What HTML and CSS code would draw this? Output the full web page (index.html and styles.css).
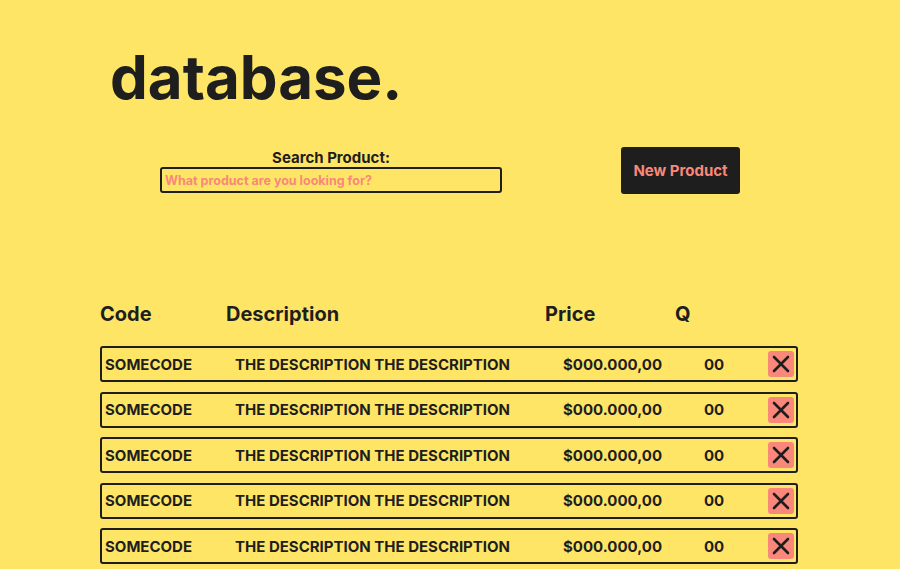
FILE: index.html
```html
<!DOCTYPE html>
<html>
<head>
<meta charset="utf-8">
<link rel="stylesheet" href="styles.css">
</head>
<body>
<main class="page">
  <h1 class="title">database.</h1>
  <section class="toolbar">
    <div class="search">
      <label class="search-label" for="q">Search Product:</label>
      <input id="q" class="search-input" type="text" placeholder="What product are you looking for?">
    </div>
    <button class="new-btn">New Product</button>
  </section>
  <section class="table">
    <div class="thead">
      <span>Code</span><span>Description</span><span>Price</span><span>Q</span>
    </div>
    <div class="rows">
      <div class="row"><span>SOMECODE</span><span>THE DESCRIPTION THE DESCRIPTION</span><span>$000.000,00</span><span>00</span><button class="del"><svg viewBox="0 0 26 26" width="26" height="26"><path d="M6 6 L20 20 M20 6 L6 20" stroke="#1e1e1e" stroke-width="2.6" stroke-linecap="round"/></svg></button></div>
      <div class="row"><span>SOMECODE</span><span>THE DESCRIPTION THE DESCRIPTION</span><span>$000.000,00</span><span>00</span><button class="del"><svg viewBox="0 0 26 26" width="26" height="26"><path d="M6 6 L20 20 M20 6 L6 20" stroke="#1e1e1e" stroke-width="2.6" stroke-linecap="round"/></svg></button></div>
      <div class="row"><span>SOMECODE</span><span>THE DESCRIPTION THE DESCRIPTION</span><span>$000.000,00</span><span>00</span><button class="del"><svg viewBox="0 0 26 26" width="26" height="26"><path d="M6 6 L20 20 M20 6 L6 20" stroke="#1e1e1e" stroke-width="2.6" stroke-linecap="round"/></svg></button></div>
      <div class="row"><span>SOMECODE</span><span>THE DESCRIPTION THE DESCRIPTION</span><span>$000.000,00</span><span>00</span><button class="del"><svg viewBox="0 0 26 26" width="26" height="26"><path d="M6 6 L20 20 M20 6 L6 20" stroke="#1e1e1e" stroke-width="2.6" stroke-linecap="round"/></svg></button></div>
      <div class="row"><span>SOMECODE</span><span>THE DESCRIPTION THE DESCRIPTION</span><span>$000.000,00</span><span>00</span><button class="del"><svg viewBox="0 0 26 26" width="26" height="26"><path d="M6 6 L20 20 M20 6 L6 20" stroke="#1e1e1e" stroke-width="2.6" stroke-linecap="round"/></svg></button></div>
    </div>
  </section>
</main>
</body>
</html>
```
FILE: styles.css
```css
* { box-sizing: border-box; }
html, body { margin: 0; height: 100%; }
body {
  background: #ffe566;
  color: #1e1e1e;
  font-family: Inter, "Noto Sans", sans-serif;
  overflow: hidden;
}
.page {
  padding: 0 0 0 100px;
  width: 800px;
}
.title {
  margin: 0;
  padding: 37px 0 0 10px;
  font-size: 60px;
  font-weight: 700;
  line-height: 80px;
}
.toolbar {
  display: flex;
  align-items: flex-start;
  margin-top: 30px;
  padding-left: 60px;
}
.search {
  display: flex;
  flex-direction: column;
  align-items: center;
  width: 342px;
  margin-top: 2px;
}
.search-label {
  font-size: 15px;
  font-weight: 700;
  line-height: 18px;
}
.search-input {
  width: 342px;
  height: 26px;
  border: 2px solid #1e1e1e;
  border-radius: 3px;
  background: transparent;
  padding: 0 3px;
  font-family: inherit;
  font-size: 12.5px;
  font-weight: 700;
  color: #1e1e1e;
  outline: none;
}
.search-input::placeholder { color: #f9887a; }
.new-btn {
  margin-left: 119px;
  width: 119px;
  height: 47px;
  background: #1e1e1e;
  color: #f9887a;
  border: none;
  border-radius: 3px;
  font-family: inherit;
  font-size: 15px;
  font-weight: 700;
}
.table {
  margin-top: 108px;
  width: 698px;
}
.thead {
  display: grid;
  grid-template-columns: 126px 319px 130px auto;
  font-size: 20px;
  font-weight: 700;
  line-height: 24px;
}
.rows {
  display: flex;
  flex-direction: column;
  gap: 9.5px;
  margin-top: 20px;
}
.row {
  display: grid;
  grid-template-columns: 130px 328px 141px 1fr 26px;
  align-items: center;
  height: 36px;
  border: 2px solid #1e1e1e;
  border-radius: 3px;
  padding: 0 2px 0 3px;
  font-size: 15px;
  font-weight: 700;
}
.del {
  width: 26px;
  height: 26px;
  padding: 0;
  border: none;
  border-radius: 3px;
  background: #f9887a;
  display: flex;
}
```
